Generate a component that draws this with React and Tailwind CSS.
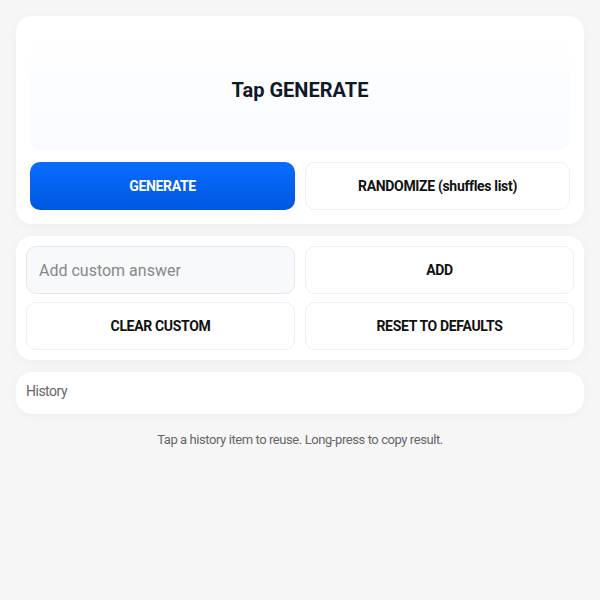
import React from 'react'

function App() {
  return (
    <div className="min-h-screen bg-[#f6f6f6] px-4 pt-4 pb-6" style={{ fontFamily: 'Roboto, "Liberation Sans", sans-serif' }}>
      <div className="rounded-2xl bg-white p-[14px] shadow-[0_2px_10px_rgba(0,0,0,0.04)]">
        <div className="h-[120px] rounded-xl bg-gradient-to-b from-white to-[#f9fbff] flex items-center justify-center">
          <h1 className="text-[20px] font-bold text-[#111827]">Tap GENERATE</h1>
        </div>
        <div className="mt-3 grid grid-cols-2 gap-[10px]">
          <button className="h-12 rounded-[10px] bg-gradient-to-b from-[#0a6cff] to-[#0057e0] text-white text-sm tracking-[-0.33px] font-bold">GENERATE</button>
          <button className="h-12 rounded-[10px] bg-white border border-[#eef0f3] text-[#111] text-sm tracking-[-0.33px] font-bold">RANDOMIZE (shuffles list)</button>
        </div>
      </div>

      <div className="mt-3 rounded-2xl bg-white p-[10px] shadow-[0_2px_10px_rgba(0,0,0,0.04)]">
        <div className="grid grid-cols-2 gap-x-[10px] gap-y-2">
          <input placeholder="Add custom answer" className="h-12 rounded-[10px] bg-[#f7f9fb] border border-[#e5e8ec] px-3 text-[16px] text-[#111] placeholder:text-[#888] outline-none" />
          <button className="h-12 rounded-[10px] bg-white border border-[#eef0f3] text-[#111] text-sm tracking-[-0.33px] font-bold">ADD</button>
          <button className="h-12 rounded-[10px] bg-white border border-[#eef0f3] text-[#111] text-sm tracking-[-0.33px] font-bold">CLEAR CUSTOM</button>
          <button className="h-12 rounded-[10px] bg-white border border-[#eef0f3] text-[#111] text-sm tracking-[-0.33px] font-bold">RESET TO DEFAULTS</button>
        </div>
      </div>

      <div className="mt-3 h-[42px] rounded-2xl bg-white px-[10px] pt-[9px] shadow-[0_2px_10px_rgba(0,0,0,0.04)]">
        <div className="text-sm tracking-[-0.5px] text-[#666]">History</div>
      </div>

      <p className="mt-4 text-center text-[13px] tracking-[-0.42px] text-[#666]">Tap a history item to reuse. Long-press to copy result.</p>
    </div>
  )
}

export default App
